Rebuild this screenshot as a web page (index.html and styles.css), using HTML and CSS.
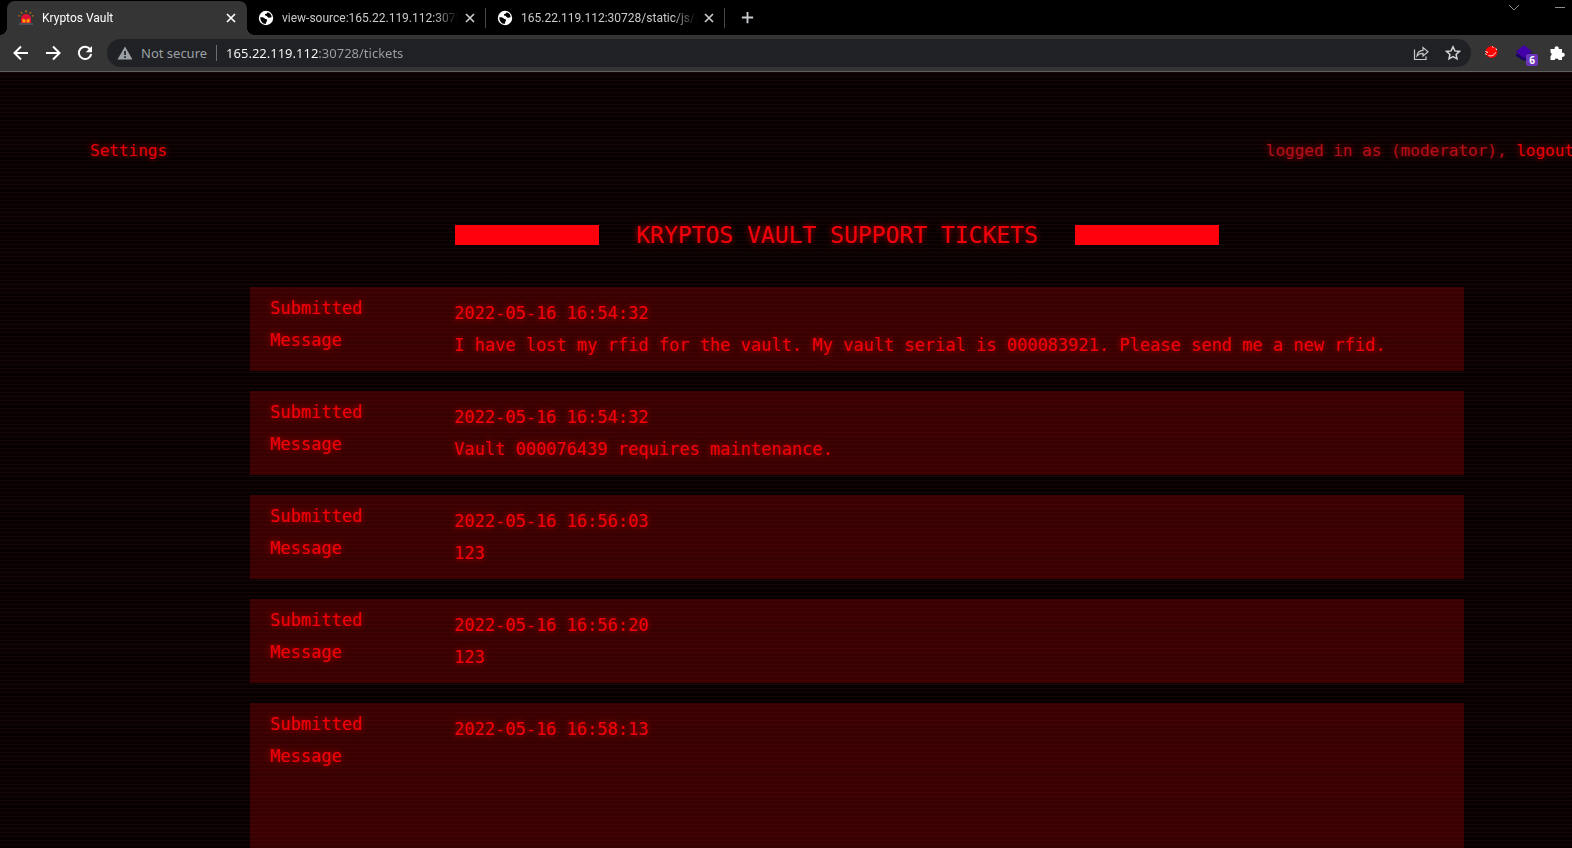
FILE: index.html
```html
<!DOCTYPE html>
<html lang="en">
<head>
<meta charset="UTF-8">
<meta name="viewport" content="width=device-width, initial-scale=1.0">
<link rel="stylesheet" href="styles.css">
<title>Kryptos Vault</title>
</head>
<body>
<svg class="defs" aria-hidden="true">
<symbol id="close" viewBox="0 0 16 16"><path d="M4 4l8 8M12 4l-8 8" stroke="currentColor" stroke-width="1.7"/></symbol>
<symbol id="globe" viewBox="0 0 16 16">
<circle cx="8" cy="8" r="7.2" fill="#fff"/>
<path d="M2.200 7.200c2.200-.2 3.600.3 4.600 1.400.8.9 2 .4 2.300 1.300.2 1-1 1.400-1.200 3.900-2.600.3-5.300-1.900-5.700-6.600zM9.600 2.300c-.2 1.200-1.100 1.600-2.100 1.700-.9.2-.5 1.700.5 1.800 1.500.2 1.400 1.700 2.700 1.900 1.200.2 1.900-.6 3-.3-.1-2.500-1.700-4.500-4.100-5.100z" fill="#000"/>
</symbol>
</svg>
<header class="browser">
<div class="tabs">
<div class="tab is-active">
<svg class="icon" viewBox="0 0 16 16">
<path d="M3 13V8.500a5 4.500 0 0 1 10 0V13z" fill="#dd1133"/>
<path d="M4.500 12.500V8.500l3 1.200v2.800zM11.500 12.500V8.500l-3 1.200v2.800z" fill="#ffa000"/>
<path d="M1 13h14v2H1z" fill="#4a4e59"/>
<path d="M8 0v2.500M3 2l1.200 1.700M13 2l-1.200 1.700M.5 5.500l1.600.7M15.500 5.500l-1.600.7" stroke="#b87913" stroke-width="1.200"/>
</svg>
<span class="name">Kryptos Vault</span>
<button class="close" aria-label="Close tab"><svg class="icon"><use href="#close"/></svg></button>
</div>
<div class="tab">
<svg class="icon"><use href="#globe"/></svg>
<span class="name">view-source:165.22.119.112:3072</span>
<button class="close" aria-label="Close tab"><svg class="icon"><use href="#close"/></svg></button>
</div>
<div class="tab">
<svg class="icon"><use href="#globe"/></svg>
<span class="name">165.22.119.112:30728/static/js/lo</span>
<button class="close" aria-label="Close tab"><svg class="icon"><use href="#close"/></svg></button>
</div>
<button class="plus" aria-label="New tab"><svg class="icon" viewBox="0 0 16 16"><path d="M8 2v12M2 8h12" stroke="currentColor" stroke-width="2"/></svg></button>
<div class="window">
<button aria-label="Search tabs"><svg class="icon" viewBox="0 0 16 16"><path d="M3 5l5 5 5-5" fill="none" stroke="#8a8a8a"/></svg></button>
<button aria-label="Minimize"><svg class="icon" viewBox="0 0 16 16"><path d="M3 7.500h10" stroke="#8a8a8a"/></svg></button>
</div>
</div>
<div class="toolbar">
<button aria-label="Back"><svg class="icon" viewBox="0 0 16 16"><path d="M15 8H2M8 1.500L1.500 8 8 14.500" fill="none" stroke="#fff" stroke-width="2"/></svg></button>
<button aria-label="Forward"><svg class="icon" viewBox="0 0 16 16"><path d="M1 8h13M8 1.500L14.500 8 8 14.500" fill="none" stroke="#fff" stroke-width="2"/></svg></button>
<button aria-label="Reload"><svg class="icon" viewBox="0 0 16 16"><path d="M13.300 4.500A6.200 6.200 0 1 0 14.200 9" fill="none" stroke="#fff" stroke-width="2"/><path d="M15 1v6.200H8.800z" fill="#fff"/></svg></button>
<div class="omnibox">
<svg class="icon" viewBox="0 0 16 16"><path d="M8 1.500L15.500 14.500H.5z" fill="#9aa0a6"/><path d="M8 6v4M8 11.200v1.800" stroke="#202124" stroke-width="1.700"/></svg>
<label class="secure" for="url">Not secure</label>
<input class="url" id="url" type="text" value="165.22.119.112:30728/tickets">
<button aria-label="Share"><svg class="icon" viewBox="0 0 16 16"><path d="M1.500 4.500v10h11.500v-3" fill="none" stroke="#c6c8ca" stroke-width="1.200"/><path d="M4 11c.3-3.800 2.500-5.500 6-5.700V2.500l5 4.300-5 4.200V8.300c-2.600 0-4.500.7-6 2.700z" fill="none" stroke="#c6c8ca" stroke-width="1.200"/></svg></button>
<button aria-label="Bookmark"><svg class="icon" viewBox="0 0 16 16"><path d="M8 1.800l1.900 4.100 4.500.5-3.300 3 .9 4.400L8 11.600l-4 2.200.9-4.400-3.300-3 4.500-.5z" fill="none" stroke="#d2d3d5" stroke-width="1.500"/></svg></button>
</div>
<div class="extensions">
<button aria-label="Cookie extension"><svg class="icon" viewBox="0 0 16 16"><circle cx="8.500" cy="7" r="6" fill="#f00"/><path d="M2.500 6.500l2.500 1M5.500 10.500c3 1 5.500 0 7-3M9 1.500l1.500 1M13 3.500l.6 1.500M2.500 8.500l1 1.500" fill="none" stroke="#fff"/></svg></button>
<button class="badged" aria-label="Extension, 6 items"><svg class="icon" viewBox="0 0 16 16"><path d="M0 8l8 4 8-4v3l-8 5-8-5z" fill="#1d006b"/><path d="M8 0l8 6.500L8 13 0 6.500z" fill="#4200a8"/></svg><span class="badge">6</span></button>
<button aria-label="Extensions"><svg class="icon" viewBox="0 0 16 16"><path d="M1.500 4h4.200a2.100 2.100 0 1 1 4 0H13v3.800a2.100 2.100 0 1 1 0 4V15H9.600a2.100 2.100 0 0 0-4 0H1.500v-4a2 2 0 0 0 0-3.600z" fill="#fff"/></svg></button>
</div>
</div>
</header>
<main class="page">
<nav class="nav">
<a href="#settings">Settings</a>
<span class="user">logged in as (moderator), <a href="#logout">logout</a></span>
</nav>
<h1 class="title">KRYPTOS VAULT SUPPORT TICKETS</h1>
<section class="tickets">
<article class="ticket">
<div class="labels"><div>Submitted</div><div>Message</div></div>
<div class="values"><div>2022-05-16 16:54:32</div><div>I have lost my rfid for the vault. My vault serial is 000083921. Please send me a new rfid.</div></div>
</article>
<article class="ticket">
<div class="labels"><div>Submitted</div><div>Message</div></div>
<div class="values"><div>2022-05-16 16:54:32</div><div>Vault 000076439 requires maintenance.</div></div>
</article>
<article class="ticket">
<div class="labels"><div>Submitted</div><div>Message</div></div>
<div class="values"><div>2022-05-16 16:56:03</div><div>123</div></div>
</article>
<article class="ticket">
<div class="labels"><div>Submitted</div><div>Message</div></div>
<div class="values"><div>2022-05-16 16:56:20</div><div>123</div></div>
</article>
<article class="ticket">
<div class="labels"><div>Submitted</div><div>Message</div></div>
<div class="values"><div>2022-05-16 16:58:13</div></div>
</article>
</section>
</main>
</body>
</html>
```
FILE: styles.css
```css
* {
box-sizing: border-box;
}
html,
body {
height: 100%;
margin: 0;
overflow: hidden;
}
body {
display: flex;
flex-direction: column;
background: #080000;
}
button {
display: flex;
align-items: center;
justify-content: center;
padding: 0;
border: 0;
background: none;
color: inherit;
cursor: pointer;
}
.defs {
display: none;
}
.icon {
display: block;
flex: none;
width: 16px;
height: 16px;
}

/* browser bar */
.browser {
flex: none;
background: #000;
color: #c8cacc;
font-family: "Noto Sans", "Open Sans", sans-serif;
}
.tabs {
display: flex;
align-items: center;
height: 35px;
padding: 0 4px 0 7px;
}
.tab {
position: relative;
display: flex;
align-items: center;
width: 239px;
height: 34px;
margin-top: 1px;
padding: 0 8px 0 11px;
font: 12px Roboto, "Noto Sans", sans-serif;
}
.tab.is-active {
width: 240px;
border-radius: 8px 8px 0 0;
background: #353535;
color: #fff;
}
/* curved feet of the active tab */
.tab.is-active::before,
.tab.is-active::after {
content: "";
position: absolute;
bottom: 0;
width: 8px;
height: 8px;
}
.tab.is-active::before {
right: 100%;
background: radial-gradient(circle at 0 0, transparent 8px, #353535 8px);
}
.tab.is-active::after {
left: 100%;
background: radial-gradient(circle at 100% 0, transparent 8px, #353535 8px);
}
.tab:not(.is-active)::after {
content: "";
position: absolute;
right: 0;
width: 1px;
height: 20px;
background: #4a4a4a;
}
.name {
flex: 1;
margin: 0 4px 0 8px;
overflow: hidden;
white-space: nowrap;
-webkit-mask-image: linear-gradient(to left, transparent, #000 24px);
mask-image: linear-gradient(to left, transparent, #000 24px);
}
.plus {
width: 28px;
height: 28px;
margin-left: 8px;
}
.plus .icon {
width: 15px;
height: 15px;
}
.window {
display: flex;
align-self: flex-start;
gap: 30px;
margin-left: auto;
}
.toolbar {
display: flex;
align-items: center;
height: 37px;
padding: 0 7px 0 13px;
border-bottom: 1px solid #606060;
background: #353535;
}
.toolbar > button {
margin-right: 16px;
}
.toolbar > button:nth-child(3) {
margin-right: 14px;
}
.omnibox {
display: flex;
flex: 1;
align-items: center;
height: 28px;
padding: 0 10px;
border-radius: 14px;
background: #202124;
}
.secure {
margin-left: 8px;
padding-right: 9px;
border-right: 1px solid #6b6d70;
color: #9aa0a6;
font-size: 13px;
line-height: 16px;
}
.url {
flex: 1;
min-width: 0;
margin-left: 9px;
padding: 0;
border: 0;
outline: none;
/* host is white, port and path are grey */
background: linear-gradient(to right, #fff 92px, #9aa0a6 92px);
-webkit-background-clip: text;
background-clip: text;
color: transparent;
font: 13px "Noto Sans", "Open Sans", sans-serif;
}
.omnibox button {
margin-left: 16px;
}
.extensions {
display: flex;
gap: 17px;
margin-left: 12px;
}
.badged {
position: relative;
}
.badge {
position: absolute;
top: 9px;
left: 10px;
width: 12px;
height: 12px;
border-radius: 2px;
background: #6a35b8;
color: #fff;
font: bold 10px/12px "Noto Sans", sans-serif;
}

/* page */
.page {
display: flex;
flex: 1;
flex-direction: column;
min-height: 0;
background:
repeating-linear-gradient(to bottom, rgba(255, 60, 60, 0.015) 0, transparent 18px, rgba(255, 60, 60, 0.015) 36px),
repeating-linear-gradient(to bottom, #130507 0, #130507 1px, #060000 1px, #060000 4px);
color: #f2000a;
font: 17px "DejaVu Sans Mono", monospace;
text-shadow: 0 0 6px rgba(255, 0, 0, 0.7);
}
.page a {
color: #e60009;
text-decoration: none;
}
.nav {
display: flex;
justify-content: space-between;
margin-right: -2px;
padding: 63px 0 0 90px;
font-size: 16px;
line-height: 32px;
white-space: nowrap;
}
.user {
color: #b5101a;
}
.title {
display: flex;
align-items: center;
justify-content: center;
gap: 37px;
margin: 52px 0 36px;
padding: 0 148px 0 250px;
font-size: 23px;
font-weight: normal;
line-height: 32px;
white-space: nowrap;
}
.title::before,
.title::after {
content: "";
width: 144px;
height: 20px;
background: #ff000c;
}
.tickets {
display: flex;
flex: 1;
flex-direction: column;
gap: 20px;
margin: 0 108px 0 250px;
}
.ticket {
display: flex;
padding: 5px 20px 10px;
background: rgba(255, 0, 6, 0.2);
line-height: 32px;
}
.ticket:last-child {
flex: 1;
padding-bottom: 0;
}
.labels {
flex: none;
width: 184px;
}
.values {
padding-top: 5px;
white-space: nowrap;
}
```
